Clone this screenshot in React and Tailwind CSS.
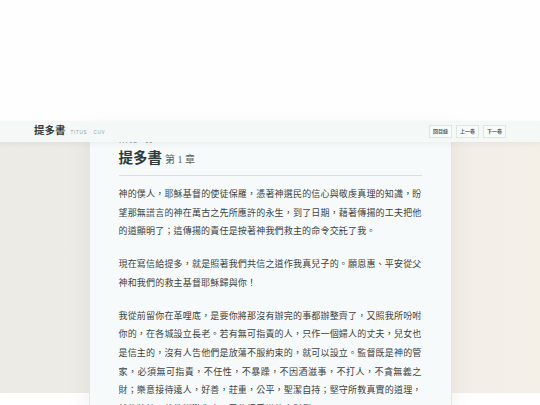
import React from 'react';

const paragraphs = [
  '神的僕人，耶穌基督的使徒保羅，憑著神選民的信心與敬虔真理的知識，盼望那無謊言的神在萬古之先所應許的永生，到了日期，藉著傳揚的工夫把他的道顯明了；這傳揚的責任是按著神我們救主的命令交託了我。',
  '現在寫信給提多，就是照著我們共信之道作我真兒子的。願恩惠、平安從父神和我們的救主基督耶穌歸與你！',
  '我從前留你在革哩底，是要你將那沒有辦完的事都辦整齊了，又照我所吩咐你的，在各城設立長老。若有無可指責的人，只作一個婦人的丈夫，兒女也是信主的，沒有人告他們是放蕩不服約束的，就可以設立。監督既是神的管家，必須無可指責，不任性，不暴躁，不因酒滋事，不打人，不貪無義之財；樂意接待遠人，好善，莊重，公平，聖潔自持；堅守所教真實的道理，就能將純正的教訓勸化人，又能把爭辯的人駁倒了。',
];

const font = 'font-["Liberation_Serif","Noto_Sans_CJK_TC",serif]';

export default function App() {
  return (
    <div className={`h-[405px] overflow-hidden bg-white ${font}`}>
      <div className="h-[121px] bg-[#fefefe]" />

      <header className="relative z-10 flex h-[21px] items-center justify-between bg-[#f4f8f7] px-[34px] shadow-[0_2px_5px_rgba(40,60,60,0.06)]">
        <div className="flex items-baseline gap-[5px]">
          <span className="text-[10.5px] font-bold leading-none text-[#34403f]">提多書</span>
          <span className="font-['Liberation_Sans',sans-serif] text-[4.6px] tracking-[0.7px] text-[#97a3a1]">TITUS · CUV</span>
        </div>
        <div className="flex gap-[4px]">
          {['回目錄', '上一卷', '下一卷'].map(b => (
            <button key={b} className="flex h-[13px] w-[23px] items-center justify-center border border-[#dde8e5] bg-[#f8fbfa] text-[5px] font-bold text-[#4f5c5a]">
              {b}
            </button>
          ))}
        </div>
      </header>

      <main className="h-[263px] bg-[linear-gradient(90deg,#ecebe6,#f0eee9_60%,#f4efe7)]">
        <article className="mx-auto -mt-[12px] w-[363px] border-x border-[#dbe8e5] bg-[#f7fafa] px-[29px] pt-[8px] pb-8 shadow-[0_0_22px_rgba(60,70,60,0.08)]">
          <div className="font-['Liberation_Sans',sans-serif] text-[5px] font-bold leading-[6px] tracking-[1px] text-[#7f8c8a]">TITUS · 01</div>
          <h1 className="mt-[6px] flex items-baseline gap-[3px] border-b border-[#d5e3e0] pb-[7px] leading-[16px]">
            <span className="text-[14.5px] font-bold text-[#2f3b3a]">提多書</span>
            <span className="text-[10px] text-[#566361]">第 1 章</span>
          </h1>
          <div className="mt-[9px] space-y-[14px]">
            {paragraphs.map((p, i) => (
              <p key={i} className="text-justify text-[9px] leading-[18.7px] tracking-[0.18px] text-[#3c4342]">
                {p}
              </p>
            ))}
          </div>
        </article>
      </main>
    </div>
  );
}
